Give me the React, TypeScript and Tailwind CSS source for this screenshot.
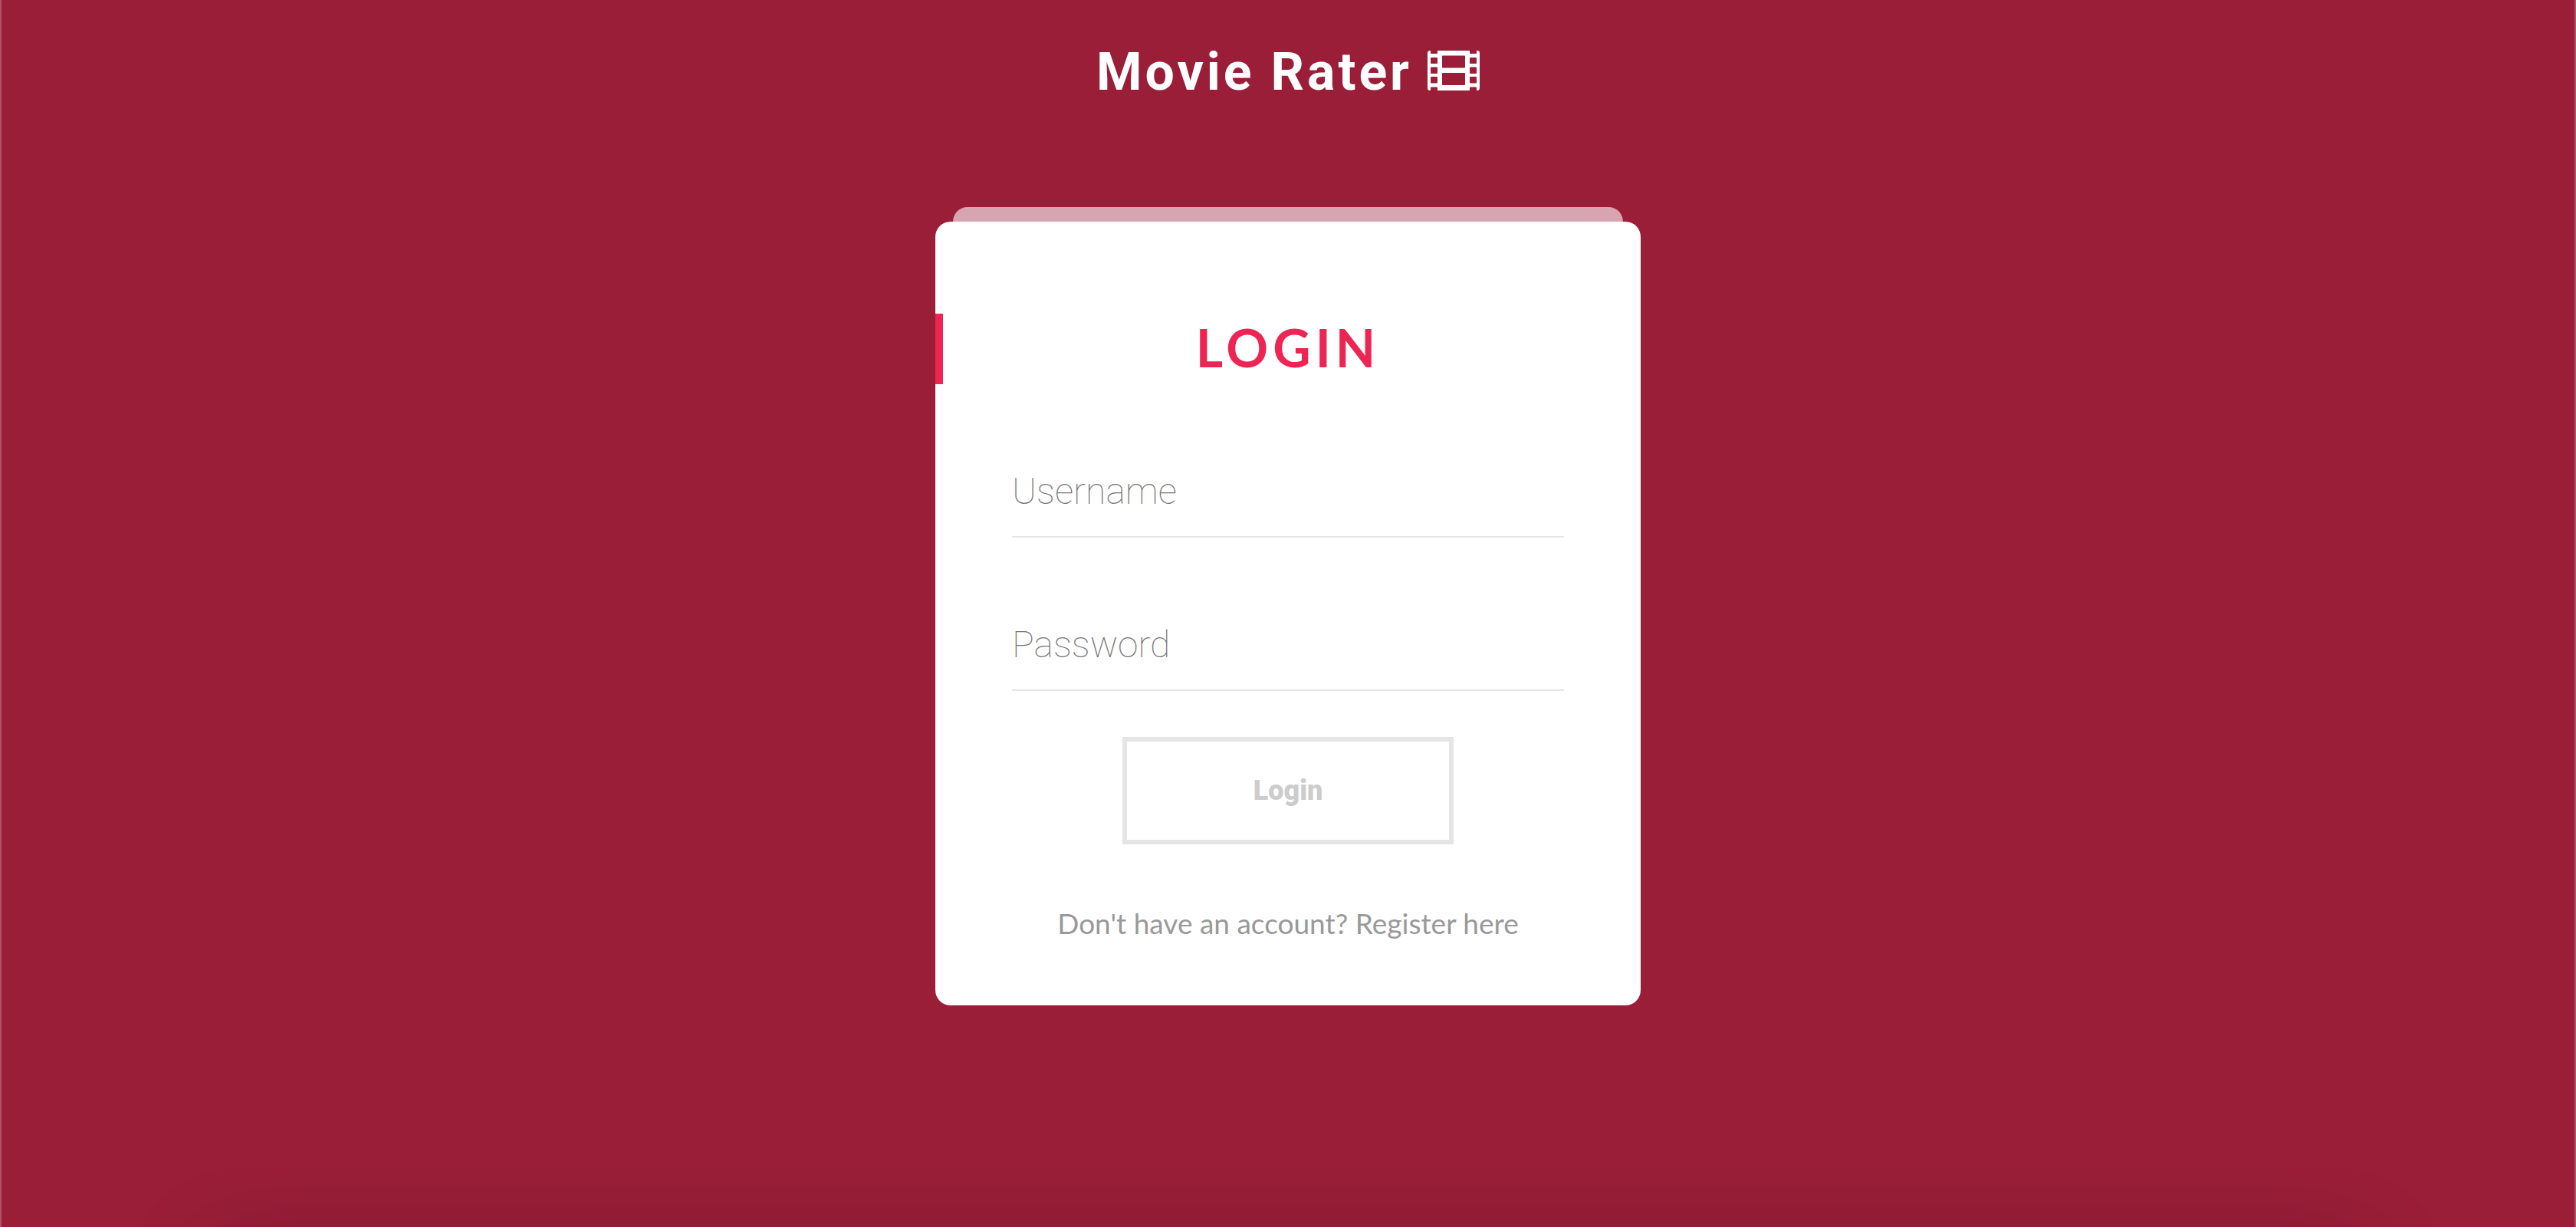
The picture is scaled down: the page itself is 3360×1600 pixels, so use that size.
function FilmIcon() {
  return (
    <svg aria-hidden="true" viewBox="0 0 68 52" className="mb-1 h-[52px] w-[68px]" fill="currentColor">
      <path
        fillRule="evenodd"
        d="M2 0H3Q4 0 4 1V3Q4 4 5 4H12Q13 4 13 3V0H55V3Q55 4 56 4H63Q64 4 64 3V1Q64 0 65 0H66Q68 1 68 3V49Q68 51 66 52H65Q64 52 64 51V48.500Q64 47.500 63 47.500H56Q55 47.500 55 48.500V52H13V48.500Q13 47.500 12 47.500H5Q4 47.500 4 48.500V51Q4 52 3 52H2Q0 51 0 49V3Q0 1 2 0Z M5 9H12Q13 9 13 10V16Q13 17 12 17H5Q4 17 4 16V10Q4 9 5 9Z M5 21.500H12Q13 21.500 13 22.500V29Q13 30 12 30H5Q4 30 4 29V22.500Q4 21.500 5 21.500Z M5 34H12Q13 34 13 35V41.500Q13 42.500 12 42.500H5Q4 42.500 4 41.500V35Q4 34 5 34Z M56 9H63Q64 9 64 10V16Q64 17 63 17H56Q55 17 55 16V10Q55 9 56 9Z M56 21.500H63Q64 21.500 64 22.500V29Q64 30 63 30H56Q55 30 55 29V22.500Q55 21.500 56 21.500Z M56 34H63Q64 34 64 35V41.500Q64 42.500 63 42.500H56Q55 42.500 55 41.500V35Q55 34 56 34Z M20 6.500H48Q49 6.500 49 7.500V21.500Q49 22.500 48 22.500H20Q19 22.500 19 21.500V7.500Q19 6.500 20 6.500Z M20 29H48Q49 29 49 30V44Q49 45 48 45H20Q19 45 19 44V30Q19 29 20 29Z"
      />
    </svg>
  );
}

function Field({ id, label, type }: { id: string; label: string; type: string }) {
  return (
    <input
      id={id}
      name={id}
      type={type}
      aria-label={label}
      placeholder={label}
      className="h-[120px] w-full border-b-2 border-[#e5e5e5] bg-transparent font-['Roboto',sans-serif] text-5xl font-thin text-[#757575] outline-none placeholder:text-[#757575] placeholder:opacity-100"
    />
  );
}

export default function App() {
  return (
    <div className="relative flex min-h-screen flex-col items-center overflow-hidden border-x-2 border-[#b2506a] bg-[#9a1e38] font-['Lato',sans-serif]">
      <header className="flex h-[270px] items-start pt-12">
        <h1 className="flex items-center gap-5 font-['Roboto',sans-serif] text-[68px] leading-[92px] font-bold tracking-[4px] text-white">
          Movie Rater
          <FilmIcon />
        </h1>
      </header>

      <main className="flex w-full max-w-[920px] flex-col items-center">
        <div className="h-[19px] w-[95%] rounded-t-[20px] bg-[#d7a5af]" />
        <section className="w-full rounded-[20px] bg-white pt-[120px] pb-[82px]">
          <h2 className="border-l-[10px] border-[#ed2553] pr-[10px] pb-1 text-center text-[68px] leading-[88px] font-bold tracking-[6px] text-[#ed2553]">
            LOGIN
          </h2>
          <form className="flex flex-col items-center px-[100px] pt-20" onSubmit={(e) => e.preventDefault()}>
            <div className="flex w-full flex-col gap-20">
              <Field id="username" label="Username" type="text" />
              <Field id="password" label="Password" type="password" />
            </div>
            <button
              type="submit"
              className="mt-[60px] h-[140px] w-[432px] border-[6px] border-[#e5e5e5] font-['Roboto',sans-serif] text-4xl font-black text-[#cccccc]"
            >
              Login
            </button>
          </form>
          <p className="pt-[78px] text-center text-[37px] leading-[50px] text-[#999999]">
            <a href="#register">Don't have an account? Register here</a>
          </p>
        </section>
      </main>

      <div className="absolute right-[280px] -bottom-[280px] left-[280px] h-60 shadow-[0_0_120px_0_rgba(0,0,0,0.3)]" />
    </div>
  );
}
